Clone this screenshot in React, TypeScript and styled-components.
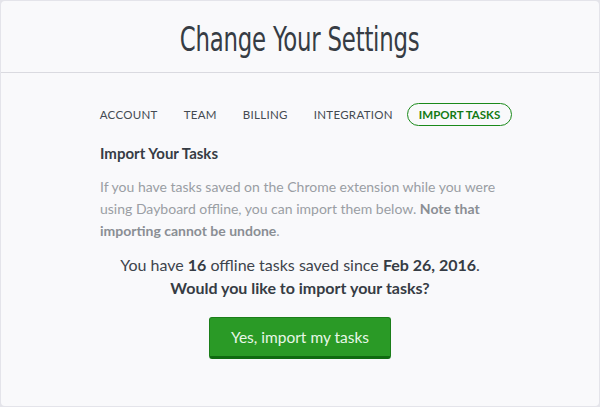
import * as React from "react";
import styled, { createGlobalStyle } from "styled-components";

const GlobalStyle = createGlobalStyle`
  html, body {
    margin: 0;
    padding: 0;
    background: #e4e4ea;
  }
  body {
    font-family: Lato, "Open Sans", sans-serif;
  }
`;

const TABS = ["Account", "Team", "Billing", "Integration", "Import Tasks"];

const App = () => {
  const [active, setActive] = React.useState("Import Tasks");
  return (
    <>
      <GlobalStyle />
      <Page>
        <Card>
          <Header>
            <Title>Change Your Settings</Title>
          </Header>
          <Body>
            <Tabs>
              {TABS.map((tab) => (
                <Tab
                  key={tab}
                  $active={tab === active}
                  onClick={() => setActive(tab)}
                >
                  {tab}
                </Tab>
              ))}
            </Tabs>
            <Content>
              <SectionTitle>Import Your Tasks</SectionTitle>
              <Description>
                If you have tasks saved on the Chrome extension while you were
                using Dayboard offline, you can import them below.{" "}
                <strong>Note that importing cannot be undone</strong>.
              </Description>
              <Summary>
                You have <strong>16</strong> offline tasks saved since{" "}
                <strong>Feb 26, 2016</strong>.
                <br />
                <strong>Would you like to import your tasks?</strong>
              </Summary>
              <ImportButton>Yes, import my tasks</ImportButton>
            </Content>
          </Body>
        </Card>
      </Page>
    </>
  );
};

export default App;

const Page = styled.div`
  width: 600px;
  height: 407px;
  padding: 1px;
  box-sizing: border-box;
  display: flex;
`;

const Card = styled.div`
  flex: 1;
  background: #f9f9fb;
  border-radius: 4px;
  display: flex;
  flex-direction: column;
`;

const Header = styled.div`
  height: 71px;
  border-bottom: 1px solid #dadae0;
  display: flex;
  align-items: center;
  justify-content: center;
`;

const Title = styled.h1`
  margin: 6px 0 0;
  font-family: "DejaVu Sans Condensed", "Liberation Sans", sans-serif;
  font-weight: 400;
  font-size: 33px;
  line-height: 40px;
  color: #363c44;
  letter-spacing: -0.3px;
  transform: scaleX(0.77);
`;

const Body = styled.div`
  padding-top: 30px;
  display: flex;
  flex-direction: column;
  align-items: center;
`;

const Tabs = styled.div`
  display: flex;
  align-items: center;
`;

const Tab = styled.button<{ $active?: boolean }>`
  font-family: Lato, "Open Sans", sans-serif;
  font-size: 11.5px;
  text-transform: uppercase;
  background: none;
  cursor: pointer;
  height: 23px;
  padding: 0 11px;
  margin: 0 1px;
  border-radius: 12px;
  border: 1px solid ${(p) => (p.$active ? "#1a8a1a" : "transparent")};
  color: ${(p) => (p.$active ? "#137a13" : "#444a52")};
  font-weight: ${(p) => (p.$active ? 700 : 400)};
  letter-spacing: ${(p) => (p.$active ? "0" : "0.3px")};
`;

const Content = styled.div`
  width: 400px;
  display: flex;
  flex-direction: column;
  align-items: center;
`;

const SectionTitle = styled.h2`
  align-self: stretch;
  margin: 18px 0 0;
  font-size: 15px;
  font-weight: 700;
  color: #363c44;
`;

const Description = styled.p`
  align-self: stretch;
  margin: 14px 0 0;
  font-size: 14px;
  line-height: 22px;
  color: #9a9ea4;
  strong {
    font-weight: 700;
    color: #8a8e94;
  }
`;

const Summary = styled.p`
  margin: 11px 0 0;
  text-align: center;
  font-size: 16px;
  line-height: 23px;
  color: #3e444c;
  white-space: nowrap;
  strong {
    font-weight: 700;
    color: #363c44;
  }
`;

const ImportButton = styled.button`
  margin-top: 18px;
  width: 182px;
  height: 42px;
  font-family: Lato, "Open Sans", sans-serif;
  font-size: 15.5px;
  color: #e8f7e8;
  background: #2a9a26;
  border: 1px solid #1c7e1a;
  border-bottom: 3px solid #0f6a10;
  border-radius: 3px;
  cursor: pointer;
`;
